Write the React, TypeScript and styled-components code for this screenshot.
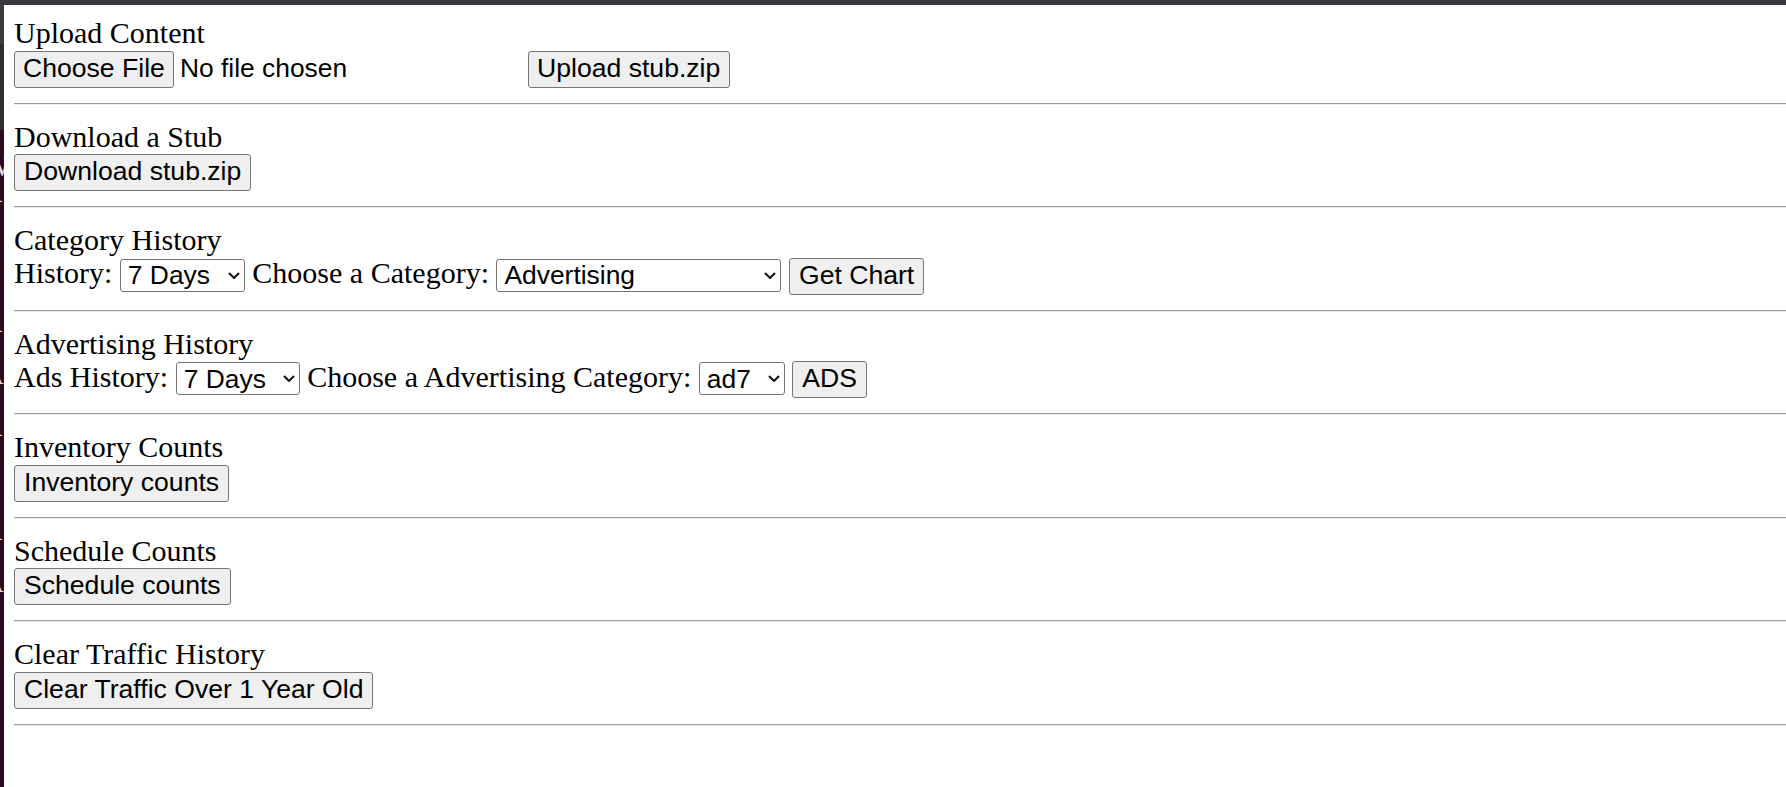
import React from "react";
import styled, { createGlobalStyle } from "styled-components";

const GlobalStyle = createGlobalStyle`
  html, body { margin: 0; padding: 0; background: #ffffff; overflow: hidden; }
  body { width: 1786px; height: 787px; }
`;

const Frame = styled.div`
  display: flex;
  flex-direction: column;
  width: 1786px;
  height: 787px;
  overflow: hidden;
`;

const TopBar = styled.div`
  height: 5px;
  flex: none;
  background: #3a383d;
`;

const Body = styled.div`
  display: flex;
  flex: 1;
  min-height: 0;
`;

const SideStrip = styled.div`
  width: 4px;
  flex: none;
  overflow: hidden;
  background: linear-gradient(
    to bottom,
    #3b3a3d 0px,
    #3b3a3d 36px,
    #4a4a4a 36px,
    #2f2e30 40px,
    #2f2e30 125px,
    #2b0b1f 125px,
    #2b0b1f 100%
  );
  display: flex;
  flex-direction: column;
  padding-top: 150px;
`;

const StripGlyph = styled.span`
  display: block;
  margin-left: -15px;
  font: 26px/26px "Liberation Serif", "Times New Roman", serif;
  color: #e8e0e6;
`;

const Page = styled.main`
  flex: 1;
  display: flex;
  flex-direction: column;
  padding: 11px 0 0 10px;
  font-family: "Liberation Serif", "Times New Roman", serif;
  color: #000;
`;

const Section = styled.section`
  display: flex;
  flex-direction: column;
`;

const Title = styled.div`
  font-size: 30px;
  line-height: 34.5px;
  height: 34.5px;
  white-space: nowrap;
`;

const Row = styled.div`
  display: flex;
  align-items: center;
  height: 37px;
  gap: 7.5px;
  white-space: nowrap;
`;

const Label = styled.span`
  font-size: 30px;
  line-height: 34.5px;
  margin-bottom: 5px;
`;

const Button = styled.button<{ $pad?: number }>`
  font-family: "Liberation Sans", Arial, sans-serif;
  font-size: 26.6px;
  line-height: 30px;
  height: 37px;
  padding: 0 ${(p) => p.$pad ?? 9}px 3px;
  border: 1px solid #767676;
  border-radius: 3px;
  background: #efefef;
  color: #000;
  cursor: default;
`;

const FileBox = styled.div`
  display: inline-flex;
  align-items: center;
  gap: 6px;
  width: 506px;
`;

const FileName = styled.span`
  font-family: "Liberation Sans", Arial, sans-serif;
  font-size: 26.4px;
  line-height: 30px;
  padding-bottom: 3px;
`;

const SelectWrap = styled.span<{ $w: number }>`
  position: relative;
  display: inline-flex;
  width: ${(p) => p.$w}px;
  height: 33px;
  margin-bottom: 2px;
  flex: none;
`;

const Select = styled.select`
  appearance: none;
  -webkit-appearance: none;
  width: 100%;
  height: 100%;
  font-family: "Liberation Sans", Arial, sans-serif;
  font-size: 26.4px;
  color: #000;
  background: #fff;
  border: 1px solid #767676;
  border-radius: 3px;
  padding: 0 0 0 7px;
  margin: 0;
  outline: none;
`;

const Chevron = styled.svg`
  position: absolute;
  right: 5px;
  top: 13px;
  width: 12px;
  height: 7px;
  pointer-events: none;
`;

const Divider = styled.hr`
  margin: 15px 0;
  height: 0;
  border: 0;
  border-top: 1px solid #9d9d9d;
  border-bottom: 1px solid #ececec;
`;

function Dropdown({ width, value, options }: { width: number; value: string; options: string[] }) {
  return (
    <SelectWrap $w={width}>
      <Select defaultValue={value}>
        {options.map((o) => (
          <option key={o} value={o}>
            {o}
          </option>
        ))}
      </Select>
      <Chevron viewBox="0 0 12 7">
        <path d="M1 1 L6 6 L11 1" fill="none" stroke="#111" strokeWidth="2" />
      </Chevron>
    </SelectWrap>
  );
}

const glyphs = ["W", "R", "P", "P", "=", "=", "R", "P", "A", "=", "R", "S", "=", "=", "R", "P", "A", "=", "=", "=", "="];

export default function App() {
  const days = ["7 Days", "14 Days", "30 Days", "90 Days"];
  return (
    <>
      <GlobalStyle />
      <Frame>
        <TopBar />
        <Body>
          <SideStrip>
            {glyphs.map((g, i) => (
              <StripGlyph key={i}>{g}</StripGlyph>
            ))}
          </SideStrip>
          <Page>
            <Section>
              <Title>Upload Content</Title>
              <Row>
                <FileBox>
                  <Button type="button" $pad={8}>Choose File</Button>
                  <FileName>No file chosen</FileName>
                </FileBox>
                <Button type="button" $pad={8.5}>Upload stub.zip</Button>
              </Row>
            </Section>
            <Divider />
            <Section>
              <Title>Download a Stub</Title>
              <Row>
                <Button type="button">Download stub.zip</Button>
              </Row>
            </Section>
            <Divider />
            <Section>
              <Title>Category History</Title>
              <Row>
                <Label>History:</Label>
                <Dropdown width={125} value="7 Days" options={days} />
                <Label>Choose a Category:</Label>
                <Dropdown width={285} value="Advertising" options={["Advertising", "News", "Sports", "Weather"]} />
                <Button type="button">Get Chart</Button>
              </Row>
            </Section>
            <Divider />
            <Section>
              <Title>Advertising History</Title>
              <Row>
                <Label>Ads History:</Label>
                <Dropdown width={124} value="7 Days" options={days} />
                <Label>Choose a Advertising Category:</Label>
                <Dropdown width={86} value="ad7" options={["ad7", "ad1", "ad2", "ad3"]} />
                <Button type="button">ADS</Button>
              </Row>
            </Section>
            <Divider />
            <Section>
              <Title>Inventory Counts</Title>
              <Row>
                <Button type="button">Inventory counts</Button>
              </Row>
            </Section>
            <Divider />
            <Section>
              <Title>Schedule Counts</Title>
              <Row>
                <Button type="button">Schedule counts</Button>
              </Row>
            </Section>
            <Divider />
            <Section>
              <Title>Clear Traffic History</Title>
              <Row>
                <Button type="button">Clear Traffic Over 1 Year Old</Button>
              </Row>
            </Section>
            <Divider />
          </Page>
        </Body>
      </Frame>
    </>
  );
}
